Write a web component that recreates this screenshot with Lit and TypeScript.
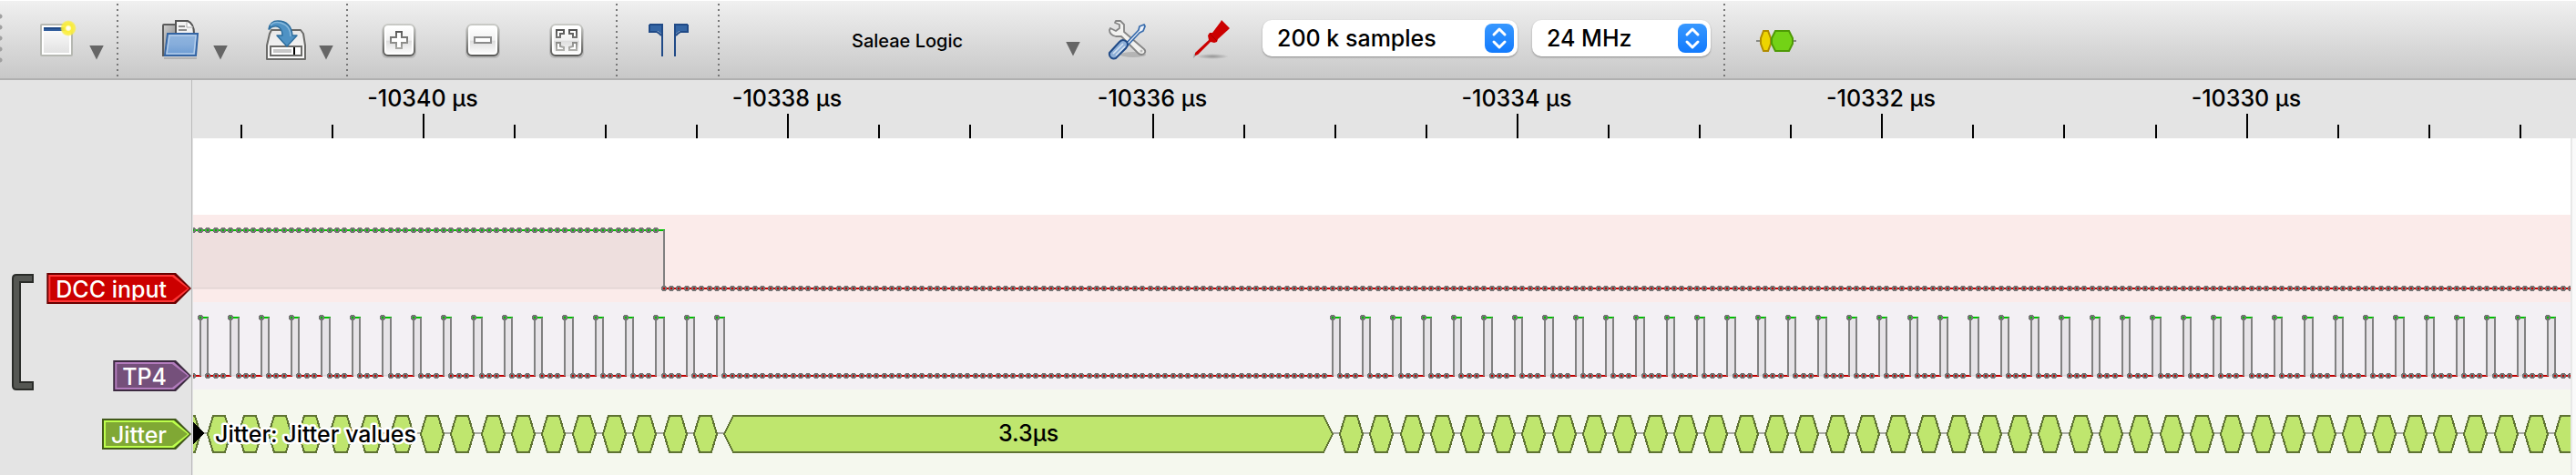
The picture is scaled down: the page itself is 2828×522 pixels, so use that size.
import { LitElement, html, svg, css, TemplateResult } from "lit";
import { customElement, property, state } from "lit/decorators.js";

/* Time scale shared by the ruler and every trace, in pixels from the left edge of the plot. */
const SAMPLE = 8.34;
const FIRST_SAMPLE = 8;
const MAJOR_ORIGIN = 253;
const MINOR_STEP = SAMPLE * 12;
const BURST_PULSES = 18;
const RESUME_SAMPLE = 149;
const DCC_FALL = 61;

const sampleX = (k: number) => Math.round(FIRST_SAMPLE + SAMPLE * k);

/* First sample of every high pulse on TP4 that is visible in the given width. */
function pulseStarts(width: number): number[] {
  const starts: number[] = [];
  for (let i = 0; i < BURST_PULSES; i++) starts.push(i * 4);
  for (let k = RESUME_SAMPLE; sampleX(k) < width + 40; k += 4) starts.push(k);
  return starts;
}

interface Span {
  from: number;
  to: number;
  high: boolean;
}

function dccSpans(width: number): Span[] {
  const last = Math.ceil(width / SAMPLE) + 2;
  return [
    { from: -1, to: DCC_FALL, high: true },
    { from: DCC_FALL, to: last, high: false },
  ];
}

function tp4Spans(width: number): Span[] {
  const spans: Span[] = [];
  let low = -1;
  for (const k of pulseStarts(width)) {
    spans.push({ from: low, to: k, high: false });
    spans.push({ from: k, to: k + 1, high: true });
    low = k + 1;
  }
  return spans;
}

@customElement("digital-trace")
class DigitalTrace extends LitElement {
  @property({ attribute: false }) spans: Span[] = [];

  static styles = css`
    :host { display: block; height: 96px; }
    svg { display: block; width: 100%; height: 100%; shape-rendering: crispEdges; }
    .area { fill: #000; fill-opacity: 0.05; }
    .edge { fill: #808080; }
    .high { fill: #00c000; }
    .low { fill: #c00000; }
    .dot { fill: #757575; }
  `;

  render() {
    const top = 17;
    const bottom = 81;
    const dots: TemplateResult[] = [];
    for (const s of this.spans) {
      const y = s.high ? top : bottom;
      for (let k = s.from; k < s.to; k++) {
        const x = sampleX(k);
        dots.push(svg`
          <path class="dot" d="M${x - 2} ${y - 3}h4v1h1v4h-1v1h-4v-1h-1v-4h1z"></path>
          <rect class=${s.high ? "high" : "low"} x=${x - 1} y=${y - 1} width="2" height="2"></rect>`);
      }
    }
    return html`<svg aria-hidden="true">
      ${this.spans.map((s, i) => {
        const x1 = sampleX(s.from);
        const x2 = sampleX(s.to);
        const y = s.high ? top : bottom;
        return svg`
          ${s.high ? svg`<rect class="area" x=${x1} y=${top} width=${x2 - x1} height=${bottom - top + 1}></rect>
          <rect class="area" x=${x1} y=${bottom - 1} width=${x2 - x1} height="1"></rect>` : ""}
          <rect class=${s.high ? "high" : "low"} x=${x1} y=${y - 1} width=${x2 - x1 + 1} height="2"></rect>
          ${i > 0 ? svg`<rect class="edge" x=${x1 - 1} y=${top} width="2" height=${bottom - top}></rect>` : ""}`;
      })}
      ${dots}
    </svg>`;
  }
}

@customElement("decoder-trace")
class DecoderTrace extends LitElement {
  @property({ type: Number }) width = 0;

  static styles = css`
    :host { display: block; min-height: 94px; }
    svg { display: block; width: 100%; height: 94px; }
    .shapes { shape-rendering: crispEdges; }
    .hex { fill: #bfe66e; stroke: #5f7333; stroke-width: 2; }
    .idle { stroke: #a8aaa4; stroke-width: 2; }
    text { font: 500 25px Inter, "Liberation Sans", sans-serif; fill: #000; }
    .title { stroke: #fff; stroke-width: 5; stroke-linejoin: round; paint-order: stroke; }
  `;

  private block(from: number, to: number, inset: number) {
    const a = sampleX(from);
    const b = sampleX(to);
    return svg`<polygon class="hex" points="${a},49 ${a + inset},29 ${b - inset},29 ${b},49 ${b - inset},69 ${a + inset},69"></polygon>`;
  }

  render() {
    const starts = pulseStarts(this.width);
    const blocks = [this.block(-3, 0, 6)];
    for (let i = 0; i < starts.length - 1; i++) {
      const from = starts[i] + 1;
      const to = starts[i + 1];
      blocks.push(this.block(from, to, to - from > 3 ? 10 : 6));
    }
    const middle = Math.floor((sampleX(BURST_PULSES * 4 - 3) + sampleX(RESUME_SAMPLE)) / 2);
    return html`<svg>
      <g class="shapes">
        <line class="idle" x1="0" y1="48" x2="100%" y2="48"></line>
        ${blocks}
        <polygon points="0,36 12,48 0,61"></polygon>
      </g>
      <text class="title" x="24" y="58">Jitter: Jitter values</text>
      <text x=${middle} y="57" text-anchor="middle">3.3µs</text>
    </svg>`;
  }
}

@customElement("time-ruler")
class TimeRuler extends LitElement {
  @property({ type: Number }) width = 0;

  static styles = css`
    :host { display: block; height: 64px; }
    svg { display: block; width: 100%; height: 100%; }
    line { stroke: #000; stroke-width: 2; shape-rendering: crispEdges; }
    text { font: 500 25px Inter, "Liberation Sans", sans-serif; fill: #000; text-anchor: middle; }
  `;

  render() {
    const marks: TemplateResult[] = [];
    for (let i = -2; MAJOR_ORIGIN + i * MINOR_STEP < this.width; i++) {
      const x = Math.round(MAJOR_ORIGIN + i * MINOR_STEP);
      if (i % 4 === 0) {
        marks.push(svg`<text x=${x - 1} y="29">${-10340 + i / 2} µs</text>
          <line x1=${x} y1="37" x2=${x} y2="64"></line>`);
      } else {
        marks.push(svg`<line x1=${x} y1="49" x2=${x} y2="64"></line>`);
      }
    }
    return html`<svg>${marks}</svg>`;
  }
}

const icons = {
  create: svg`
    <defs><linearGradient id="page" x2="0" y2="1"><stop stop-color="#fdfdfd"/><stop offset="1" stop-color="#e2e2e2"/></linearGradient>
    <radialGradient id="sun"><stop stop-color="#fff"/><stop offset=".25" stop-color="#fffbd0"/><stop offset=".4" stop-color="#fbee3c"/><stop offset=".8" stop-color="#fbee3c" stop-opacity=".85"/><stop offset="1" stop-color="#fbee3c" stop-opacity="0"/></radialGradient></defs>
    <rect x="5" y="5" width="34" height="34" rx="1" fill="#fff" stroke="#b6b8b2" stroke-width="2"/>
    <rect x="8" y="8" width="28" height="28" fill="url(#page)"/>
    <rect x="8" y="8" width="24" height="4" fill="#204a87"/><rect x="8" y="10" width="24" height="2" fill="#2f5c9c"/>
    <circle cx="35" cy="9" r="9" fill="url(#sun)"/>`,
  open: svg`
    <defs><linearGradient id="back" x2="1" y2="1"><stop stop-color="#d0d0d0"/><stop offset="1" stop-color="#777"/></linearGradient>
    <linearGradient id="front" x2="0" y2="1"><stop stop-color="#90b5de"/><stop offset=".5" stop-color="#86addb"/><stop offset="1" stop-color="#6a9bd2"/></linearGradient></defs>
    <path d="M4 41h36v2H4z" fill="#000" opacity=".15"/>
    <path d="M3 39V6q0-1 1-1h15v34z" fill="url(#back)" stroke="#5b5b5b" stroke-width="2"/>
    <path d="M17 15V1h13q7 3 7 14z" fill="#f3f3f3" stroke="#555" stroke-width="2"/>
    <path d="M29 2v6h7" fill="#fff" stroke="#aaa"/>
    <path d="M20 7h7M20 11h9" stroke="#8a8a8a" stroke-width="2"/>
    <path d="M8 15h33l-2 24H5z" fill="url(#front)" stroke="#3465a4" stroke-width="2"/>
    <path d="M10 17h29l-2 20H7z" fill="none" stroke="#b4cdea" stroke-width="1.5"/>`,
  save: svg`
    <defs><linearGradient id="steel" x2="0" y2="1"><stop stop-color="#e8e8e8"/><stop offset="1" stop-color="#fafafa"/></linearGradient></defs>
    <path d="M6 11h32l3 4 2 13v15H1V28L4 15z" fill="url(#steel)" stroke="#6b6b69" stroke-width="2" stroke-linejoin="round"/>
    <rect x="5" y="29" width="34" height="10" fill="#fff" stroke="#6b6b69" stroke-width="2"/>
    <rect x="8" y="32" width="20" height="4" fill="#c8c8c8"/><rect x="30" y="30" width="2" height="8" fill="#000"/>
    <path d="M3 10C4 4 7 1 13 1c10 0 15 6 16 16h5L23 29 12 17h6c0-7-4-11-9-10-2 0-4 1-5 3z" fill="#4f92c4" stroke="#2f6f9f" stroke-width="1.5" stroke-linejoin="round"/>
    <path d="M5 6c3-4 7-4 11-3 7 2 11 7 11 15" fill="none" stroke="#86b8dc" stroke-width="1.5"/>`,
  zoomIn: svg`<path d="M19 13h6v6h6v6h-6v6h-6v-6h-6v-6h6z" fill="#fff" stroke="url(#ink)" stroke-width="2"/>`,
  zoomOut: svg`<rect x="13" y="19" width="18" height="6" fill="#fff" stroke="#8b8b8b" stroke-width="2"/>`,
  zoomFit: svg`<g fill="#fff" stroke="url(#ink)" stroke-width="2">
    <path d="M11 11h8v4h-4v4h-4z"/><path d="M33 11h-8v4h4v4h4z"/><path d="M11 33h8v-3l-4-1v-4h-4z"/><path d="M33 33h-8v-3l4-1v-4h4z"/></g>`,
  cursors: svg`
    <path d="M1 5h14v35M1 5v8h8l3 2 2 2" fill="none" stroke="#204a87" stroke-width="2"/><path d="M2 6h12v9l-4-3H2z" fill="#3465a4"/>
    <path d="M43 5H29v35M43 5v8h-8l-3 2-2 2" fill="none" stroke="#204a87" stroke-width="2"/><path d="M42 6H30v9l4-3h8z" fill="#3465a4"/>`,
  tools: svg`
    <ellipse cx="28" cy="38" rx="14" ry="3" fill="#000" opacity=".15"/>
    <path d="M9 1h5l4 4v8l22 19c3 3 0 6-3 6-2 0-3-1-4-2L15 18H9c-4-1-7-3-7-7l1-2 6 3 4-3V5L8 3z" fill="#f2f2f0" stroke="#858585" stroke-width="1.8" stroke-linejoin="round"/>
    <circle cx="37" cy="34" r="1.5" fill="#bbb"/>
    <path d="M19 27L34 11l1-4 5-2 1 2-2 5-4 2-14 15z" fill="#eef3fa" stroke="#3a6dad" stroke-width="1.8" stroke-linejoin="round"/>
    <path d="M2 36l11-12c3-3 6-2 8 0 2 3 1 5-1 7L9 42c-3 1-8 0-7-6z" fill="#8fb0d8" stroke="#204a87" stroke-width="2"/>
    <path d="M6 37l11-11M9 39l10-10" stroke="#d5e2f1" stroke-width="1.6"/>`,
  probe: svg`
    <defs><radialGradient id="shade"><stop stop-color="#000" stop-opacity=".3"/><stop offset="1" stop-color="#000" stop-opacity="0"/></radialGradient></defs>
    <ellipse cx="23" cy="40" rx="18" ry="3" fill="url(#shade)"/>
    <path d="M2 42l1-5 3 1z" fill="#999"/>
    <path d="M4 36L19 22l-1-5 2-3h3L32 2l1-2 4 4 5 5-2 2-11 10-1 3-3 1-4-1L7 38l-3 1z" fill="#c00"/>
    <path d="M20 15l8 8" stroke="#a40000"/>`,
  decoder: svg`
    <path d="M0 23h44" stroke="#888a85" stroke-width="2"/>
    <path d="M8 12h5l3 8v6l-3 8H8l-3-8v-6z" fill="#edd400" stroke="#b08c00" stroke-width="2"/>
    <path d="M21 12h15l4 8v6l-4 8H21l-4-8v-6z" fill="#73d216" stroke="#4e9a06" stroke-width="2"/>`,
};

type IconName = keyof typeof icons;

@customElement("tool-icon")
class ToolIcon extends LitElement {
  @property() name: IconName = "create";

  static styles = css`
    :host, svg { display: block; width: 44px; height: 44px; }
  `;

  render() {
    const framed = this.name.startsWith("zoom");
    return html`<svg viewBox="0 0 44 44" aria-hidden="true">
      ${framed
        ? svg`<defs>
            <linearGradient id="ink" gradientUnits="userSpaceOnUse" x1="0" y1="10" x2="0" y2="34"><stop stop-color="#4d4d4d"/><stop offset="1" stop-color="#b4b4b0"/></linearGradient>
            <linearGradient id="rim" x2="0" y2="1"><stop stop-color="#c9cac6"/><stop offset="1" stop-color="#5a5a58"/></linearGradient>
            <linearGradient id="face" x2="0" y2="1"><stop stop-color="#fff"/><stop offset=".5" stop-color="#f1f1f1"/><stop offset=".55" stop-color="#dedede"/><stop offset="1" stop-color="#fafafa"/></linearGradient></defs>
            <rect x="3" y="6" width="38" height="36" rx="6" fill="#000" opacity=".12"/>
            <rect x="5" y="5" width="34" height="34" rx="5" fill="#fff" stroke="url(#rim)" stroke-width="2"/>
            <rect x="8" y="8" width="28" height="28" rx="2" fill="url(#face)"/>`
        : ""}
      ${icons[this.name]}
    </svg>`;
  }
}

@customElement("app-root")
class AppRoot extends LitElement {
  @state() private plotWidth = 2610;
  private observer?: ResizeObserver;

  static styles = css`
    :host {
      display: flex;
      flex-direction: column;
      min-height: 100vh;
      background: #e4e4e4;
      font-family: Inter, "Liberation Sans", sans-serif;
      font-weight: 500;
      font-size: 25px;
      color: #000;
    }
    button { appearance: none; border: 0; background: none; padding: 0; font: inherit; color: inherit; }

    .toolbar {
      box-sizing: border-box;
      display: flex;
      align-items: center;
      height: 88px;
      padding-left: 4px;
      border-top: 1px solid #fff;
      border-bottom: 2px solid #b0b0b0;
      background: linear-gradient(#f0f0f0, #c8c8c8);
      position: relative;
    }
    .grip {
      position: absolute;
      left: 0;
      top: 11px;
      width: 3px;
      height: 60px;
      background: radial-gradient(circle at 0 50%, #a0a0a0 2px, transparent 3px) 0 0 / 3px 12px repeat-y;
    }
    .tool { padding: 0 24px; }
    .menu { display: flex; align-items: center; gap: 14px; padding: 0 6px 0 36px; }
    .arrow { width: 16px; height: 16px; background: #666; clip-path: polygon(0 0, 100% 0, 50% 100%); }
    .menu .arrow { margin-top: 28px; }
    .separator {
      align-self: stretch;
      flex: none;
      width: 2px;
      margin: 3px 10px 2px 8px;
      background: linear-gradient(#777 2px, transparent 2px) 0 0 / 2px 6px;
    }
    .device {
      display: flex;
      align-items: center;
      width: 392px;
      padding: 0 6px 0 22px;
      font-size: 20px;
    }
    .device-name { flex: 1; padding-top: 2px; }
    .device .arrow { margin-top: 20px; }
    .fields { display: flex; gap: 16px; margin: 0 6px 0 10px; }
    .field { position: relative; display: block; margin-top: -4px; }
    select {
      appearance: none;
      display: block;
      height: 40px;
      border: 0;
      border-radius: 10px;
      padding: 0 50px 0 16px;
      background: #fff;
      box-shadow: 0 1px 2px rgba(0, 0, 0, 0.35);
      font: inherit;
      color: #000;
    }
    .samples { width: 280px; }
    .rate { width: 196px; }
    .chevrons { position: absolute; right: 4px; top: 4px; width: 32px; height: 32px; pointer-events: none; }

    .workspace { flex: 1; display: flex; }
    .names {
      box-sizing: border-box;
      flex: none;
      width: 212px;
      padding-top: 212px;
      border-right: 1px solid #e4e4e4;
      box-shadow: inset -1px 0 #bbb;
      display: flex;
      flex-direction: column;
      gap: 30px;
    }
    .group { display: flex; justify-content: space-between; padding-left: 13px; }
    .bracket { width: 24px; height: 128px; margin-top: 1px; }
    .tags { display: flex; flex-direction: column; align-items: flex-end; gap: 62px; padding-right: 1px; }
    .tag, .ring, .fill {
      display: block;
      clip-path: polygon(0 0, calc(100% - 17px) 0, 100% 50%, calc(100% - 17px) 100%, 0 100%);
    }
    .tag { padding: 2px; }
    .ring { padding: 2px; }
    .fill { box-sizing: border-box; height: 26px; line-height: 28px; padding: 0 23px 0 6px; color: #fff; }
    .red { background: #6a0000; }
    .red .ring { background: #ff3838; }
    .red .fill { background: #cc0000; }
    .purple { background: #3c2a40; }
    .purple .ring { background: #b37cbd; }
    .purple .fill { background: #75507b; }
    .green { background: #41591a; }
    .green .ring { background: #bdff4c; }
    .green .fill { background: #80a834; }

    .view { flex: 1; min-width: 0; display: flex; flex-direction: column; }
    .canvas { flex: 1; display: flex; }
    .traces { flex: 1; min-width: 0; display: flex; flex-direction: column; background: #fff; padding-top: 84px; }
    .scroll { flex: none; width: 4px; border-left: 2px solid #e8e8e8; background: #fafafa; }
    .dcc { background: #fbebea; }
    .tp4 { background: #f3f0f4; }
    .jitter { background: #f5f8ee; flex: 1; }
  `;

  firstUpdated() {
    const traces = this.renderRoot.querySelector(".traces")!;
    this.observer = new ResizeObserver(() => {
      this.plotWidth = traces.clientWidth;
    });
    this.observer.observe(traces);
  }

  disconnectedCallback() {
    super.disconnectedCallback();
    this.observer?.disconnect();
  }

  private tool(name: IconName, label: string) {
    return html`<button class="tool" aria-label=${label}><tool-icon name=${name}></tool-icon></button>`;
  }

  private menu(name: IconName, label: string) {
    return html`<button class="menu" aria-label=${label}>
      <tool-icon name=${name}></tool-icon><span class="arrow"></span>
    </button>`;
  }

  private field(label: string, kind: string, value: string) {
    return html`<label class="field">
      <select class=${kind} aria-label=${label}><option>${value}</option></select>
      <svg class="chevrons" viewBox="0 0 32 32" aria-hidden="true">
        <defs><linearGradient id="blue" x2="0" y2="1"><stop stop-color="#3898ff"></stop><stop offset="1" stop-color="#127afd"></stop></linearGradient></defs>
        <rect width="32" height="32" rx="8" fill="url(#blue)"></rect>
        <path d="M10 12l6-6 6 6M10 20l6 6 6-6" fill="none" stroke="#fff" stroke-width="3" stroke-linecap="round" stroke-linejoin="round"></path>
      </svg>
    </label>`;
  }

  private tag(text: string, color: string) {
    return html`<button class="tag ${color}"><span class="ring"><span class="fill">${text}</span></span></button>`;
  }

  render() {
    const separator = html`<span class="separator"></span>`;
    return html`
      <div class="toolbar" role="toolbar">
        <span class="grip"></span>
        ${this.menu("create", "New session")}
        ${separator}
        ${this.menu("open", "Open")}
        ${this.menu("save", "Save")}
        ${separator}
        ${this.tool("zoomIn", "Zoom in")}
        ${this.tool("zoomOut", "Zoom out")}
        ${this.tool("zoomFit", "Zoom to fit")}
        ${separator}
        ${this.tool("cursors", "Show cursors")}
        ${separator}
        <button class="device"><span class="device-name">Saleae Logic</span><span class="arrow"></span></button>
        ${this.tool("tools", "Configure device")}
        ${this.tool("probe", "Configure channels")}
        <div class="fields">
          ${this.field("Sample count", "samples", "200 k samples")}
          ${this.field("Sample rate", "rate", "24 MHz")}
        </div>
        ${separator}
        ${this.tool("decoder", "Add protocol decoder")}
      </div>
      <div class="workspace">
        <div class="names">
          <div class="group">
            <svg class="bracket" viewBox="0 0 24 128" aria-hidden="true">
              <path d="M23 1H5Q1 1 1 5v118q0 4 4 4h18v-8H9V9h14z" fill="#555753" stroke="#2a2c29" stroke-width="2"></path>
            </svg>
            <div class="tags">${this.tag("DCC input", "red")}${this.tag("TP4", "purple")}</div>
          </div>
          <div class="tags">${this.tag("Jitter", "green")}</div>
        </div>
        <div class="view">
          <time-ruler .width=${this.plotWidth}></time-ruler>
          <div class="canvas">
            <div class="traces">
              <digital-trace class="dcc" .spans=${dccSpans(this.plotWidth)}></digital-trace>
              <digital-trace class="tp4" .spans=${tp4Spans(this.plotWidth)}></digital-trace>
              <decoder-trace class="jitter" .width=${this.plotWidth}></decoder-trace>
            </div>
            <div class="scroll"></div>
          </div>
        </div>
      </div>
    `;
  }
}
